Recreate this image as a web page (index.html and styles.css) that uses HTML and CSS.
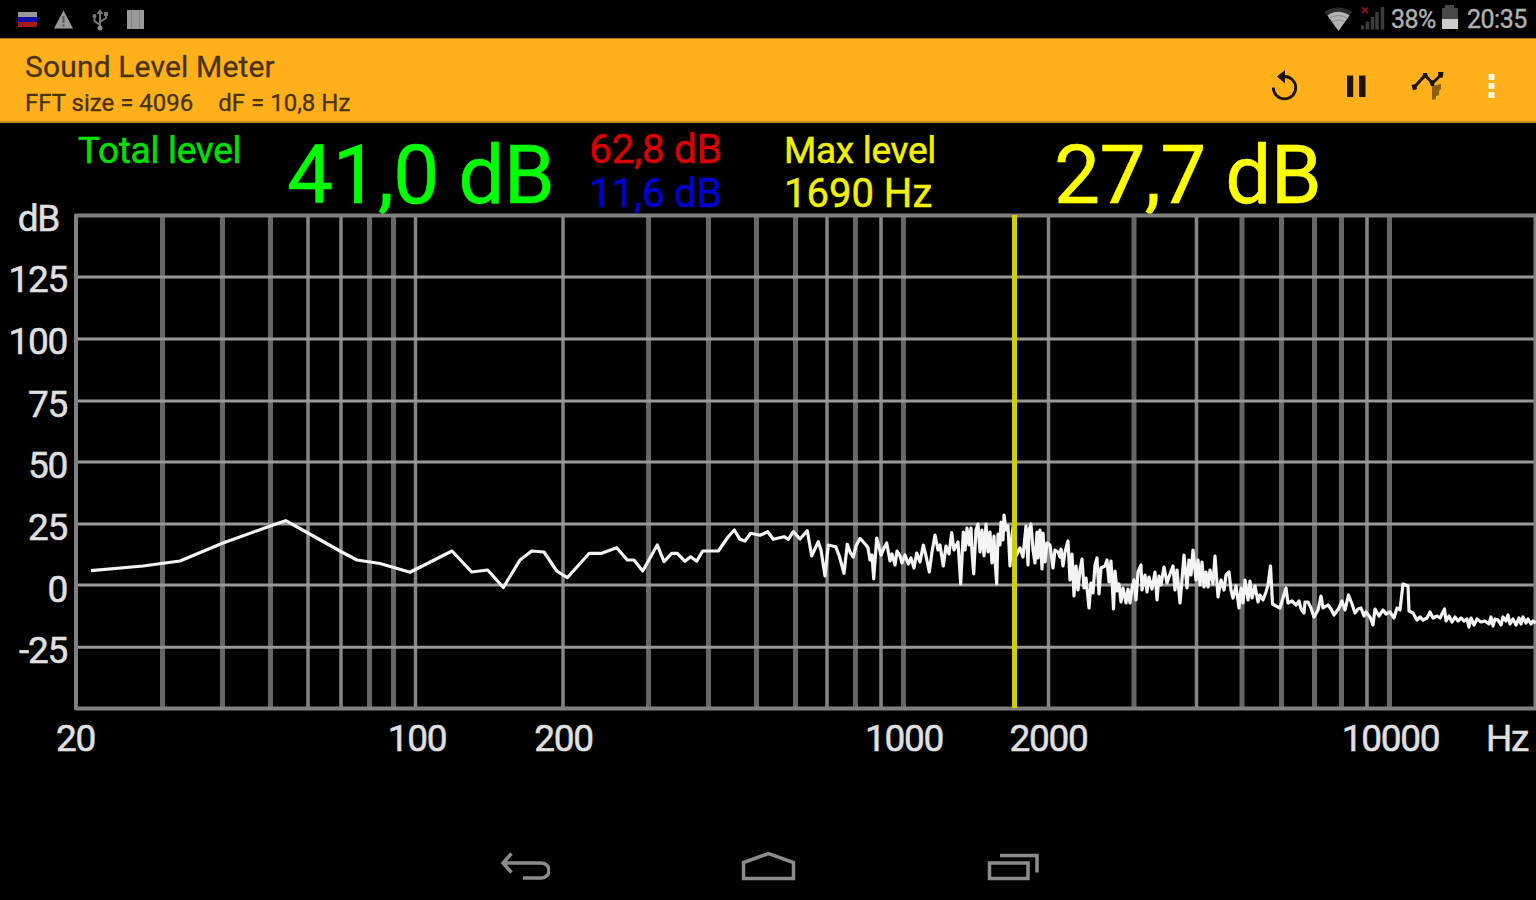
FILE: index.html
```
<!DOCTYPE html>
<html lang="en">
<head>
    <meta charset="utf-8">
    <title>Sound Level Meter</title>
    <link rel="stylesheet" href="styles.css">
</head>
<body>
    <div class="statusbar">
        <svg class="status-left" width="160" height="38" viewBox="0 0 160 38">
            <rect x="18" y="12" width="19" height="5" fill="#999"/>
            <rect x="18" y="17" width="19" height="5" fill="#1010a8"/>
            <rect x="18" y="22" width="19" height="5" fill="#a81818"/>
            <path d="M63.500 10.500L73 28.500H54z" fill="#999"/>
            <path d="M63.500 16v7M63.500 24.500v2" stroke="#555" stroke-width="2"/>
            <path d="M100 29V12M100 25l-5.500-4v-5M100 22l6-4v-4" fill="none" stroke="#777" stroke-width="2"/>
            <path d="M96.500 14L100 9l3.500 5z" fill="#777"/>
            <circle cx="94.500" cy="16" r="2" fill="#777"/>
            <rect x="104" y="12" width="4" height="4" fill="#777"/>
            <circle cx="100" cy="28" r="2.500" fill="#888"/>
            <rect x="127" y="10" width="17" height="19" fill="#999"/>
            <path d="M131.500 10v19M139.500 10v19" stroke="#858585"/>
        </svg>
        <div class="status-right">
            <svg width="62" height="38" viewBox="1324 0 62 38">
                <path d="M1324.500 12Q1338 3 1352 12L1338.500 31z" fill="#2c2c2c"/>
                <path d="M1327.500 15.500Q1338 8 1349.500 15.500L1338.500 31z" fill="#b4b4b4"/>
                <path d="M1329 18.500q9.500-6 19 0M1332 22q6.500-4 13 0" fill="none" stroke="#888"/>
                <path d="M1362.500 29.500v-4M1367.500 29.500v-8M1372.500 29.500V17M1377 29.500V12M1382.500 29.500V7" stroke="#3c3c3c" stroke-width="3.500"/>
                <path d="M1362 7.500l5.500 5.500M1367.500 7.500l-5.500 5.500" stroke="#8c1020" stroke-width="2"/>
            </svg>
            <span class="percent">38%</span>
            <svg width="18" height="38" viewBox="1441 0 18 38">
                <path d="M1445 5h9v3h4v11h-16V8h3z" fill="#484848"/>
                <rect x="1442" y="19" width="16" height="10" fill="#ccc"/>
            </svg>
            <span class="clock">20:35</span>
        </div>
    </div>

    <div class="actionbar">
        <div class="titles">
            <h1>Sound Level Meter</h1>
            <p><span>FFT size = 4096</span><span>dF = 10,8 Hz</span></p>
        </div>
        <div class="actions">
            <!-- restart -->
            <svg width="32" height="36" viewBox="1268 68 32 36">
                <path d="M1284 76.500A11.200 11.200 0 1 1 1273.300 87.500" fill="none" stroke="#1c1400" stroke-width="2.800"/>
                <path d="M1277 76.500L1285 70v13.500z" fill="#1c1400"/>
            </svg>
            <!-- pause -->
            <svg width="24" height="36" viewBox="1344 68 24 36">
                <path d="M1347 75.500h6.200v21.500h-6.200zM1359 75.500h6.500v21.500h-6.500z" fill="#1c1400"/>
            </svg>
            <!-- graph mode -->
            <svg width="36" height="36" viewBox="1410 68 36 36">
                <path d="M1432 86l9-2v5l-2 2v4l-3 1v3l-4 1z" fill="#8c6014"/>
                <path d="M1413.500 88L1425 75.500l7.500 7.500L1442 74" fill="none" stroke="#1c1400" stroke-width="3"/>
                <path d="M1411.500 85l4.500-1 1 5-4 1.500zM1438 72h5.500l-1 6-4-1zM1423 73l4 0 1.500 5h-6zM1429 81l6-1-1 6h-3z" fill="#1c1400"/>
            </svg>
            <!-- overflow menu -->
            <svg width="10" height="36" viewBox="1486 68 10 36">
                <path d="M1488.500 74h6v6h-6zM1488.500 83h6v6h-6zM1488.500 92h6v6h-6z" fill="#fff8e8"/>
            </svg>
        </div>
    </div>

    <div class="readouts">
        <div class="label total">Total level</div>
        <div class="big total-value">41,0 dB</div>
        <div class="range">
            <div class="max">62,8 dB</div>
            <div class="min">11,6 dB</div>
        </div>
        <div class="peak">
            <div class="label">Max level</div>
            <div class="freq">1690 Hz</div>
        </div>
        <div class="big peak-value">27,7 dB</div>
    </div>

    <svg class="chart" width="1536" height="617" viewBox="0 215 1536 617">
        <path class="grid-wide" d="M162.500 215V708M222.500 215V708M270.500 215V708M369.500 215V708M393.500 215V708M648.500 215V708M708.500 215V708M756.500 215V708M795.500 215V708M855.500 215V708M903.500 215V708M1134 215V708M1242 215V708M1281.500 215V708M1314.500 215V708M1341.500 215V708M1389.500 215V708"/>
        <path class="grid-thin" d="M308 215V708M341 215V708M415.500 215V708M563 215V708M827 215V708M881 215V708M1048.500 215V708M1196.500 215V708M1367 215V708"/>
        <path class="grid-thin rows" d="M76 277H1536M76 339H1536M76 401H1536M76 462H1536M76 524H1536M76 585H1536M76 647.300H1536"/>
        <path class="frame" d="M1536 215.500H76V708.500H1536M1535.500 215V708"/>

        <polyline class="spectrum" points="
            91,570.700 143,566 180,561 223,543 273,525 285.700,520.700 308,533 341.700,552 357,560 380,563.500 410,572.300
            452,551 471.700,572 487.700,570 503.300,587.500 520,560 531.700,551 544,552 556.700,571 567.300,577.700 589.300,553.300
            601.700,553.300 616.700,547.700 627.300,560 634,560 642.700,571 657.300,545 664,561.700 671.700,553.300 677.300,553.300
            685,561.300 690.700,556.700 696.700,561.300 702.700,551 718.300,551 728,537 734.300,530 740,539.300 745,541 750.700,533.300
            760,535.300 767.700,531.700 773.300,539.300 784,536.700 788.300,539.300 793.300,531.700 800,539 807.300,530.700
            811.700,556 818.300,541.700 821,550 825,576 828.300,545 835.700,546.700 839.300,556 844,573.300 847.300,544.300 850,552
            853.300,557 856,546 860,538.300 866,545 868,548 870,560 872,555 873.700,579 876.700,538 881,555 884,548 886.700,543
            890,561 892,554 895,565 897,551 900,556 902,563 905,555 908.300,564 911,558 914,568 916.700,553 920,562 923.300,545
            926,556 929.300,572 932,552 935,535 938,550 940,545 943.300,566 946,546 949,554 951.700,532.700 954,550 958,542
            960.700,584 963.300,532 965,550 967,528 969,545 971,528 972,552 973.700,574 976,530 978,524 980,552 982,530
            984,556 986,524 988,552 990,532 992,563 994,536 995,560 996.700,584 998,534 1000,545 1001,522 1003,540 1004,515
            1006,530 1008,526 1010,566 1012,535 1014.500,516 1016,556 1020,548 1023,557 1026,526 1028,565 1029,530 1031,524
            1033,550 1035,563 1037,532 1038,558 1040,530 1042,569 1043,533 1045,562 1047,543 1050,545 1053,568 1055,550
            1058,552 1060,557 1061,549 1063,566 1065,552 1068,541 1070,580 1072,554 1074,596 1076,566 1078,590 1080,570
            1082,559 1084,588 1086,578 1089,608 1091,583 1093,593 1095,565 1097,558 1099,594 1101,568 1105,566 1107,560
            1109,582 1111,561 1113.500,609 1115,571 1117,591 1119,584 1121,602 1123,588 1126,603 1128,589 1130,603 1132,588
            1134,580 1136,600 1138,572 1141,565 1142,590 1145,575 1147,592 1149,577 1152,589 1155,572 1157,600 1159,576
            1161,585 1164,567 1167,583 1170,574 1173,566 1175,590 1177,570 1180,603 1182,580 1184,555 1187,588 1189,560
            1191,575 1193,550 1196,580 1198,560 1200,585 1202,562 1204,587 1206,572 1208,587 1210,570 1213,584 1215,556
            1218,597 1221,580 1224,590 1226,575 1229,572 1231,590 1233,598 1236,586 1239,608 1241,588 1243,603 1245,580
            1248,600 1250,581 1252,598 1255,586 1258,602 1260,595 1263,600 1266,592 1268,585 1270.500,566 1272.500,604
            1276,606 1280,608 1283,598 1286,588 1288,603 1292,601 1296,605 1299,601 1301,609 1304,613 1305,602 1308,602
            1311,608 1314,617 1318,610 1321,596 1323,608 1328,605 1331,609 1334,615 1339,608 1342,601 1345,610 1348.500,595
            1352,604 1355,613 1358,609 1361,608 1364,616 1366,612 1370,617 1373,625 1375,609 1379,616 1383,610 1386,614
            1390,612 1394,618 1397,608 1400,610 1403,584 1408,586 1409,611 1413,613 1417,620 1420,617 1423,620 1427,618
            1430,612 1433,618 1437,616 1440,618 1444.500,609 1446,621 1449,616 1452,622 1455,617 1458,621 1461,618 1464,621
            1467,619 1469,627 1471,618 1474,625 1477,619 1481,622 1485,621 1489,624 1491,617 1493,626 1495,619 1498,620
            1501,625 1503,617 1506,621 1508,615 1510,624 1513,619 1516,625 1519,618 1521,624 1523,617 1526,623 1528,619 1531,624 1533,621 1536,623"/>
        <path class="cursor" d="M1014.500 215V708"/>

        <g class="axis y-axis">
            <text x="59" y="230.500">dB</text>
            <text x="67" y="292">125</text>
            <text x="67" y="353.500">100</text>
            <text x="67" y="416.500">75</text>
            <text x="67" y="478">50</text>
            <text x="67" y="539.500">25</text>
            <text x="67" y="601.500">0</text>
            <text x="67" y="662.500">-25</text>
        </g>
        <g class="axis x-axis">
            <text x="75.500" y="751">20</text>
            <text x="417" y="751">100</text>
            <text x="563.500" y="751">200</text>
            <text x="904" y="751">1000</text>
            <text x="1048.500" y="751">2000</text>
            <text x="1390.500" y="751">10000</text>
            <text x="1507" y="751">Hz</text>
        </g>
    </svg>

    <div class="navbar">
        <svg width="50" height="32" viewBox="500 850 50 32">
            <path d="M503 863h38.500a7.500 7.500 0 0 1 0 15H523M511.500 853.500L503 863l8.500 9.500"/>
        </svg>
        <svg width="56" height="32" viewBox="740 850 56 32">
            <path d="M743.500 878.500v-16L768.500 853.500l25 9v16z"/>
        </svg>
        <svg width="52" height="32" viewBox="987 850 52 32">
            <path d="M989.500 863h38.500v15.500h-38.500zM1000 855.500h37v17"/>
        </svg>
    </div>
</body>
</html>
```
FILE: styles.css
```
body {
    display: flex;
    flex-direction: column;
    height: 100vh;
    margin: 0;
    background: #000;
    font-family: Roboto, sans-serif;
    overflow: hidden;
}
svg {
    display: block;
    flex: none;
}
.statusbar {
    display: flex;
    justify-content: space-between;
    height: 38px;
    flex: none;
}
.status-right {
    display: flex;
    padding-right: 9px;
    color: #b0b0b0;
    font-size: 25px;
    line-height: 39px;
    letter-spacing: -0.5px;
    -webkit-text-stroke: 0.4px;
}
.percent {
    width: 50px;
    margin-left: 5px;
}
.clock {
    width: 60px;
    margin-left: 8px;
}
.actionbar {
    display: flex;
    justify-content: space-between;
    height: 85px;
    box-sizing: border-box;
    flex: none;
    border-top: 1px solid #a87410;
    border-bottom: 2px solid #c88a14;
    background: #ffb01a;
    color: #49330a;
}
.titles {
    padding: 10px 0 0 25px;
    -webkit-text-stroke: 0.3px;
}
.titles h1 {
    margin: 0;
    font-size: 30px;
    font-weight: 400;
    line-height: 36px;
    letter-spacing: 0.15px;
}
.titles p {
    display: flex;
    gap: 25px;
    margin: 0;
    font-size: 24px;
    line-height: 36px;
}
.actions {
    display: flex;
    padding: 29px 40px 0 0;
}
.actions svg:nth-child(2) {
    margin-left: 44px;
}
.actions svg:nth-child(3) {
    margin-left: 42px;
}
.actions svg:nth-child(4) {
    margin-left: 40px;
}
.readouts {
    display: flex;
    height: 92px;
    flex: none;
    white-space: nowrap;
    -webkit-text-stroke: 0.5px;
}
.label {
    font-size: 37px;
    line-height: 44px;
    letter-spacing: -0.3px;
}
.total {
    width: 209px;
    padding: 6px 0 0 78px;
    color: #00e000;
}
.big {
    font-size: 82px;
    line-height: 98px;
    padding-top: 3px;
    letter-spacing: -0.7px;
}
.total-value {
    width: 302px;
    color: #0f0;
}
.range {
    width: 195px;
    padding-top: 4px;
    font-size: 41px;
    line-height: 44px;
    letter-spacing: -0.5px;
}
.max {
    color: #d80000;
}
.min {
    color: #0000d0;
}
.peak {
    width: 270px;
    padding-top: 6px;
    color: #f0f000;
}
.freq {
    font-size: 40px;
    line-height: 42px;
}
.peak-value {
    color: #ff0;
}
.chart {
    overflow: visible;
}
.chart path,
.spectrum {
    fill: none;
}
.grid-wide {
    stroke: #666;
    stroke-width: 5;
}
.grid-thin {
    stroke: #858585;
    stroke-width: 3.5;
}
.rows {
    stroke: #999;
    stroke-width: 3;
}
.frame {
    stroke: #808080;
    stroke-width: 4;
    stroke-linejoin: round;
}
.spectrum {
    stroke: #f4f4f4;
    stroke-width: 3.2;
    stroke-linejoin: round;
}
.cursor {
    stroke: #d2cc00;
    stroke-width: 5;
}
.axis {
    fill: #e0e0e0;
    stroke: #e0e0e0;
    stroke-width: 0.5;
    font-size: 37px;
    letter-spacing: -1.3px;
}
.y-axis {
    text-anchor: end;
}
.x-axis {
    text-anchor: middle;
}
.navbar {
    display: flex;
    height: 68px;
    flex: none;
    padding: 18px 0 0 500px;
    box-sizing: border-box;
}
.navbar svg {
    margin-right: 191px;
    fill: none;
    stroke: #8c8c8c;
    stroke-width: 3.5;
}
.navbar svg:first-child {
    margin-right: 190px;
}
```
